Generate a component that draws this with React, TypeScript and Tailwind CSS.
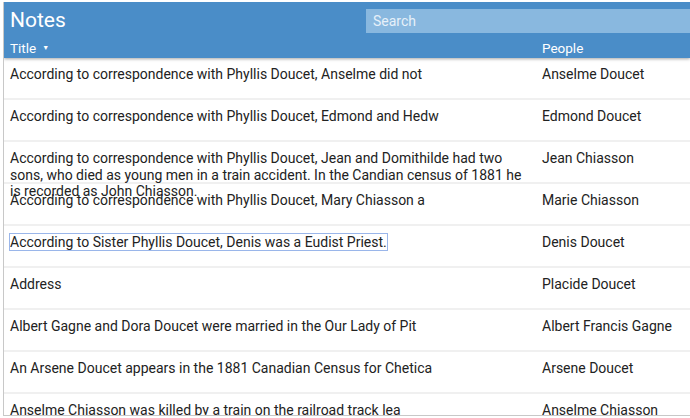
const notes = [
  { title: "According to correspondence with Phyllis Doucet, Anselme did not", people: "Anselme Doucet" },
  { title: "According to correspondence with Phyllis Doucet, Edmond and Hedw", people: "Edmond Doucet" },
  {
    title:
      "According to correspondence with Phyllis Doucet, Jean and Domithilde had two sons, who died as young men in a train accident. In the Candian census of 1881 he is recorded as John Chiasson.",
    people: "Jean Chiasson",
  },
  { title: "According to correspondence with Phyllis Doucet, Mary Chiasson a", people: "Marie Chiasson" },
  { title: "According to Sister Phyllis Doucet, Denis was a Eudist Priest.", people: "Denis Doucet", focused: true },
  { title: "Address", people: "Placide Doucet" },
  { title: "Albert Gagne and Dora Doucet were married in the Our Lady of Pit", people: "Albert Francis Gagne" },
  { title: "An Arsene Doucet appears in the 1881 Canadian Census for Chetica", people: "Arsene Doucet" },
  { title: "Anselme Chiasson was killed by a train on the railroad track lea", people: "Anselme Chiasson" },
];

export default function App() {
  return (
    <div
      className="w-[690px] h-[418px] overflow-hidden bg-white"
      style={{ fontFamily: "Roboto, 'Liberation Sans', sans-serif" }}
    >
      <div className="ml-[3px] mt-[2px] h-[414px] border-l border-b border-[#c8c8c8] flex flex-col overflow-hidden">
        {/* header */}
        <div className="bg-[#4a8dc8] text-white shadow-[0_1px_3px_rgba(0,0,0,0.35)] relative z-10">
          <div className="flex items-center h-[37px]">
            <div className="pl-[6px] text-[21px] leading-none w-[362px]">Notes</div>
            <div className="flex-1 h-[24px] mt-[1px] bg-[#89b8df] flex items-center pl-[7px] text-[14px] text-[#e6f0f9]">
              Search
            </div>
          </div>
          <div className="flex h-[19px] items-start text-[13.5px] leading-[19px]">
            <div className="w-[538px] pl-[6px] flex items-center gap-[6px]">
              Title
              <span className="text-[7px] leading-none">▼</span>
            </div>
            <div>People</div>
          </div>
        </div>

        {/* rows */}
        <div className="flex-1">
          {notes.map((n, i) => (
            <div
              key={i}
              className="h-[42px] flex border-b-2 border-[#f0f0f0] text-[14px] leading-[16.5px] text-[#222]"
            >
              <div className="w-[538px] pl-[6px] pr-[11px] pt-[8px]">
                <span className={n.focused ? "outline outline-1 outline-[#9ab6ea]" : ""}>{n.title}</span>
              </div>
              <div className="pt-[8px] whitespace-nowrap">{n.people}</div>
            </div>
          ))}
        </div>
      </div>
    </div>
  );
}
